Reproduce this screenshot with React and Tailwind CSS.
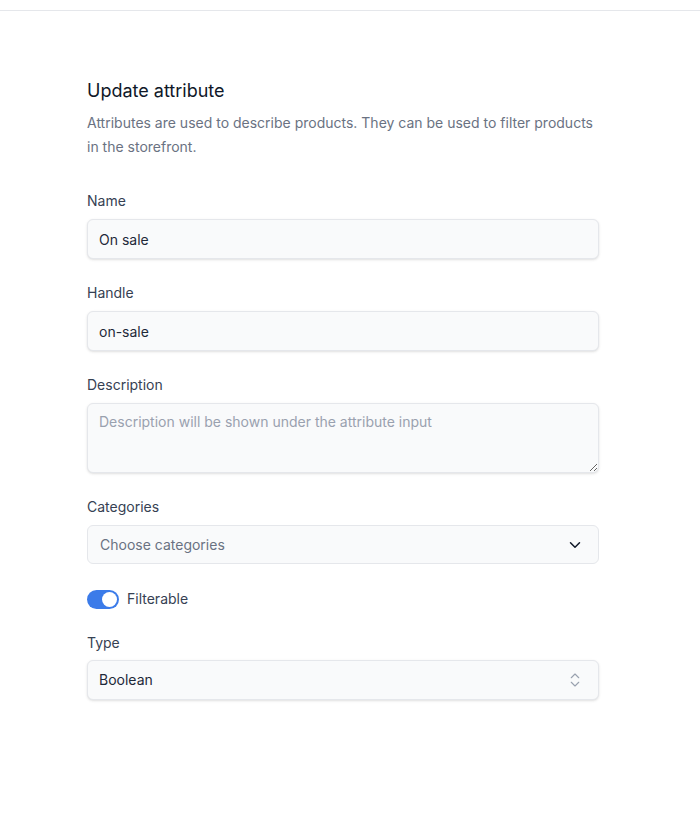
import React, { useState } from 'react';
import { ChevronDown, ChevronsUpDown } from 'lucide-react';

const inputClass =
  'block w-full rounded-md border border-gray-200 bg-gray-50 px-[11px] text-sm text-gray-800 shadow-sm outline-none placeholder:text-gray-400';

const Label = ({ children }) => (
  <label className="block text-sm leading-5 text-gray-700">{children}</label>
);

export default function App() {
  const [filterable, setFilterable] = useState(true);

  return (
    <div className="min-h-[818px] bg-white" style={{ fontFamily: 'Inter, "Noto Sans", sans-serif' }}>
      {/* top bar */}
      <div className="h-[11px] border-b border-gray-200" />

      <div className="w-[512px] ml-[87px] pt-[66px]">
        <h2 className="text-lg leading-7 text-gray-900">Update attribute</h2>
        <p className="mt-[6px] text-sm leading-6 text-gray-500">
          Attributes are used to describe products. They can be used to filter products in the storefront.
        </p>

        <div className="mt-8">
          <Label>Name</Label>
          <input className={`${inputClass} mt-2 h-10`} defaultValue="On sale" />
        </div>

        <div className="mt-6">
          <Label>Handle</Label>
          <input className={`${inputClass} mt-2 h-10`} defaultValue="on-sale" />
        </div>

        <div className="mt-6">
          <Label>Description</Label>
          <textarea
            className={`${inputClass} mt-2 h-[70px] py-[8px] leading-5`}
            placeholder="Description will be shown under the attribute input"
          />
        </div>

        <div className="mt-6">
          <Label>Categories</Label>
          <button className="mt-2 flex h-[39px] w-full items-center justify-between rounded-md border border-gray-200 bg-gray-50 pl-3 pr-[14px] text-sm text-gray-500">
            <span>Choose categories</span>
            <ChevronDown size={18} strokeWidth={2} className="text-gray-900" />
          </button>
        </div>

        <div className="mt-[25px] flex items-center gap-2">
          <button
            onClick={() => setFilterable(!filterable)}
            className={`relative h-[19px] w-8 rounded-full ${filterable ? 'bg-[#3b7be9]' : 'bg-gray-300'}`}
          >
            <span
              className={`absolute top-[2px] h-[15px] w-[15px] rounded-full bg-white ${filterable ? 'left-[15px]' : 'left-[2px]'}`}
            />
          </button>
          <span className="text-sm leading-5 text-gray-700">Filterable</span>
        </div>

        <div className="mt-6">
          <Label>Type</Label>
          <button className="mt-[7px] flex h-10 w-full items-center justify-between rounded-md border border-gray-200 bg-gray-50 pl-[11px] pr-[14px] text-sm text-gray-800 shadow-sm">
            <span>Boolean</span>
            <ChevronsUpDown size={18} strokeWidth={1.5} className="text-gray-400" />
          </button>
        </div>
      </div>
    </div>
  );
}
